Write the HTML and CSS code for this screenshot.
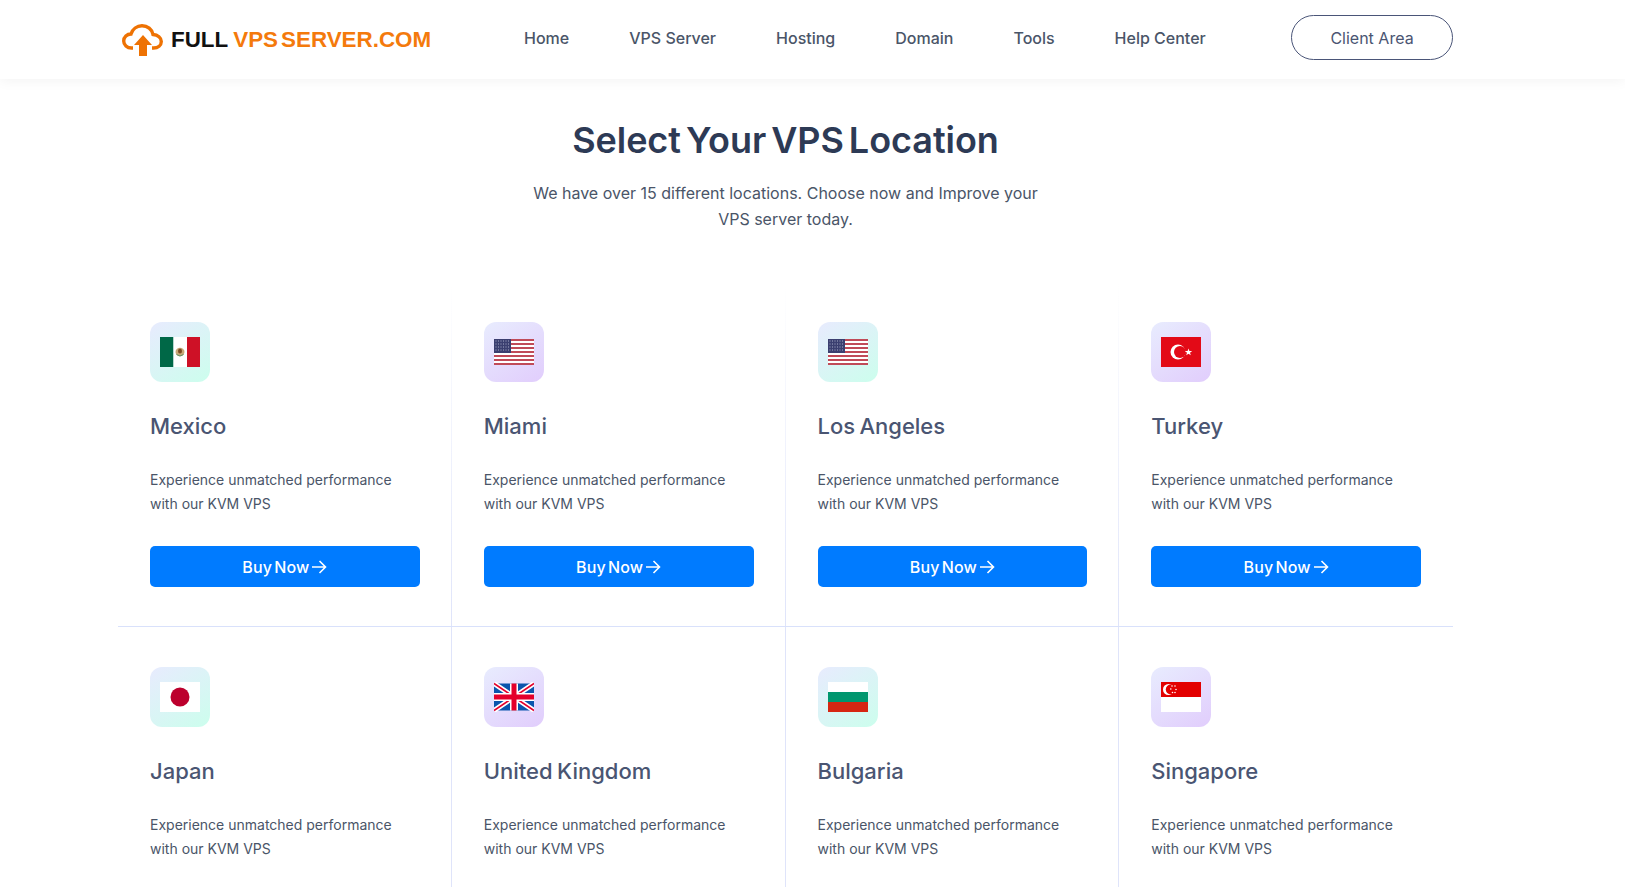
FILE: index.html
```html
<!DOCTYPE html>
<html lang="en">
<head>
    <meta charset="UTF-8">
    <meta name="viewport" content="width=device-width, initial-scale=1.0">
    <title>Select Your VPS Location</title>
    <link rel="stylesheet" href="styles.css">
</head>
<body>
    <svg class="sprite" aria-hidden="true">
        <symbol id="flag-us" viewBox="0 0 40 30">
            <rect y="2" width="40" height="26" fill="#fff"/>
            <path d="M0 3h40M0 7h40M0 11h40M0 15h40M0 19h40M0 23h40M0 27h40" stroke="#c04a58" stroke-width="2"/>
            <rect y="2" width="17" height="14" fill="#3b3f70"/>
            <path d="M1.5 4h14M1.5 7h14M1.5 10h14M1.5 13h14" stroke="#a9adc8" stroke-width="1" stroke-dasharray="1 1.5"/>
        </symbol>
        <symbol id="arrow" viewBox="0 0 16 16">
            <path d="M1 8h13.5M8.5 2l6 6-6 6" fill="none" stroke="currentColor" stroke-width="1.6"/>
        </symbol>
    </svg>

    <header class="site-header">
        <div class="container header-inner">
            <a class="logo" href="#">
                <svg class="logo-icon" viewBox="0 0 41 32" aria-hidden="true">
                    <path d="M11 24H9.500C5 24 1.700 20.800 1.700 17 1.700 13 5 10 9 10 10.500 5 15 1.800 20 1.800 25.500 1.800 30 5.300 31 10.500 35.800 10.800 39.300 13.800 39.300 17.500 39.300 21.300 36 24 31.500 24H30" fill="none" stroke="#ee7203" stroke-width="3.400"/>
                    <path d="M21 11L30 21H25V32H17V21H12Z" fill="#ee7203"/>
                </svg>
                <span class="logo-text">FULL</span>
                <span class="logo-text orange">VPS</span>
                <span class="logo-text orange">SERVER.COM</span>
            </a>
            <nav class="main-nav">
                <a href="#">Home</a>
                <a href="#">VPS Server</a>
                <a href="#">Hosting</a>
                <a href="#">Domain</a>
                <a href="#">Tools</a>
                <a href="#">Help Center</a>
            </nav>
            <a class="client-btn" href="#">Client Area</a>
        </div>
    </header>

    <main class="container">
        <div class="section-title">
            <h1>Select Your VPS Location</h1>
            <p>We have over 15 different locations. Choose now and Improve your VPS server today.</p>
        </div>

        <div class="location-grid">
            <div class="card top">
                <div class="flag-box mint">
                    <svg class="flag" viewBox="0 0 40 30">
                        <rect width="13.500" height="30" fill="#006847"/>
                        <rect x="13.500" width="13.500" height="30" fill="#fff"/>
                        <rect x="27" width="13" height="30" fill="#ce1126"/>
                        <ellipse cx="20" cy="15" rx="4.500" ry="4.200" fill="#c9a878"/>
                        <ellipse cx="20" cy="14" rx="2" ry="2.500" fill="#7a4a22"/>
                        <path d="M16.500 17.500Q20 20.500 23.500 17.500" fill="none" stroke="#5d8f62" stroke-width="1"/>
                    </svg>
                </div>
                <h3>Mexico</h3>
                <p>Experience unmatched performance with our KVM VPS</p>
                <a class="buy-btn" href="#">Buy Now<svg class="arrow"><use href="#arrow"/></svg></a>
            </div>
            <div class="card top">
                <div class="flag-box violet">
                    <svg class="flag"><use href="#flag-us"/></svg>
                </div>
                <h3>Miami</h3>
                <p>Experience unmatched performance with our KVM VPS</p>
                <a class="buy-btn" href="#">Buy Now<svg class="arrow"><use href="#arrow"/></svg></a>
            </div>
            <div class="card top">
                <div class="flag-box mint">
                    <svg class="flag"><use href="#flag-us"/></svg>
                </div>
                <h3>Los Angeles</h3>
                <p>Experience unmatched performance with our KVM VPS</p>
                <a class="buy-btn" href="#">Buy Now<svg class="arrow"><use href="#arrow"/></svg></a>
            </div>
            <div class="card top">
                <div class="flag-box violet">
                    <svg class="flag" viewBox="0 0 40 30">
                        <rect width="40" height="30" fill="#e30a17"/>
                        <circle cx="17" cy="15" r="7.500" fill="#fff"/>
                        <circle cx="19" cy="15" r="6" fill="#e30a17"/>
                        <path d="M27.500 11.500l.9 2.600 2.800-.1-2.200 1.700.8 2.600-2.300-1.500-2.300 1.500.8-2.600-2.200-1.700 2.800.1z" fill="#fff"/>
                    </svg>
                </div>
                <h3>Turkey</h3>
                <p>Experience unmatched performance with our KVM VPS</p>
                <a class="buy-btn" href="#">Buy Now<svg class="arrow"><use href="#arrow"/></svg></a>
            </div>

            <div class="card">
                <div class="flag-box mint">
                    <svg class="flag" viewBox="0 0 40 30">
                        <rect width="40" height="30" fill="#fff"/>
                        <circle cx="20" cy="15" r="9.500" fill="#bc002d"/>
                    </svg>
                </div>
                <h3>Japan</h3>
                <p>Experience unmatched performance with our KVM VPS</p>
            </div>
            <div class="card">
                <div class="flag-box violet">
                    <svg class="flag" viewBox="0 0 40 30">
                        <rect y="1.500" width="40" height="27" fill="#0b55ad"/>
                        <path d="M0 1.500L40 28.500M40 1.500L0 28.500" stroke="#fff" stroke-width="5"/>
                        <path d="M0 1.500L40 28.500M40 1.500L0 28.500" stroke="#e4002b" stroke-width="1.600"/>
                        <path d="M20 1.500V28.500M0 15H40" stroke="#fff" stroke-width="8"/>
                        <path d="M20 1.500V28.500M0 15H40" stroke="#e4002b" stroke-width="5"/>
                    </svg>
                </div>
                <h3>United Kingdom</h3>
                <p>Experience unmatched performance with our KVM VPS</p>
            </div>
            <div class="card">
                <div class="flag-box mint">
                    <svg class="flag" viewBox="0 0 40 30">
                        <rect width="40" height="10" fill="#fff"/>
                        <rect y="10" width="40" height="10" fill="#00966e"/>
                        <rect y="20" width="40" height="10" fill="#d62612"/>
                    </svg>
                </div>
                <h3>Bulgaria</h3>
                <p>Experience unmatched performance with our KVM VPS</p>
            </div>
            <div class="card">
                <div class="flag-box violet">
                    <svg class="flag" viewBox="0 0 40 30">
                        <rect width="40" height="15" fill="#e30000"/>
                        <rect y="15" width="40" height="15" fill="#fff"/>
                        <circle cx="7.500" cy="7.500" r="5.500" fill="#fff"/>
                        <circle cx="9.800" cy="7.500" r="5" fill="#e30000"/>
                        <path d="M11 4h.01M14 4h.01M9.800 7h.01M15 7.500h.01M11.500 10.500h.01M14 10.500h.01" stroke="#fff" stroke-width="1.600" stroke-linecap="round"/>
                    </svg>
                </div>
                <h3>Singapore</h3>
                <p>Experience unmatched performance with our KVM VPS</p>
            </div>
        </div>
    </main>
</body>
</html>
```

FILE: styles.css
```css
/* General */
html, body {
    height: 100%;
    overflow: hidden;
}

body {
    margin: 0;
    font-family: 'Inter', sans-serif;
    color: #4a5568;
    background: #fff;
}

a {
    text-decoration: none;
    color: inherit;
}

.sprite {
    display: none;
}

.container {
    width: 1335px;
    margin-left: 118px;
}

/* Header */
.site-header {
    height: 79px;
    background: #fff;
    box-shadow: 0 2px 12px rgba(0, 0, 0, 0.05);
}

.header-inner {
    box-sizing: border-box;
    height: 100%;
    padding-bottom: 5px;
    display: flex;
    align-items: center;
}

.logo {
    display: flex;
    align-items: center;
    flex: none;
    width: 313px;
    margin-top: 5px;
}

.logo-icon {
    flex: none;
    width: 41px;
    height: 32px;
    margin: 0 8px 0 4px;
}

.logo-text {
    flex: none;
    font-family: 'Liberation Sans', sans-serif;
    font-weight: 700;
    font-size: 22.400px;
    color: #111;
    margin-right: 5px;
}

.logo-text.orange {
    color: #f47a0c;
    margin-right: 3px;
}

.main-nav {
    display: flex;
    gap: 60px;
    margin-left: 93px;
    margin-top: 2px;
    font-size: 16px;
    font-weight: 500;
}

.client-btn {
    margin-left: auto;
    width: 162px;
    height: 45px;
    box-sizing: border-box;
    padding-top: 1px;
    display: flex;
    align-items: center;
    justify-content: center;
    border: 1px solid #4a5578;
    border-radius: 23px;
    font-size: 16px;
    color: #4a5572;
}

/* Section title */
.section-title {
    text-align: center;
    padding-top: 37px;
    margin-bottom: 50px;
}

.section-title h1 {
    margin: 0 0 16px;
    font-size: 36px;
    line-height: 48px;
    font-weight: 600;
    letter-spacing: -0.05px;
    word-spacing: -4px;
    color: #2d3a55;
}

.section-title p {
    width: 520px;
    margin: 0 auto;
    font-size: 16px;
    line-height: 26px;
}

/* Location cards */
.location-grid {
    display: grid;
    grid-template-columns: repeat(4, 1fr);
}

.card {
    padding: 40px 32px;
    background: linear-gradient(#dfe4fa, #dfe4fa) right top / 1px 100% no-repeat;
}

.card:nth-child(4n) {
    background: none;
}

.card.top {
    padding-bottom: 39px;
    border-bottom: 1px solid #d9e1fb;
    background: linear-gradient(rgba(223, 228, 250, 0), #dfe4fa) right top / 1px 100% no-repeat;
}

.card.top:nth-child(4n) {
    background: none;
}

.flag-box {
    width: 60px;
    height: 60px;
    border-radius: 12px;
    display: flex;
    align-items: center;
    justify-content: center;
}

.flag-box.mint {
    background: linear-gradient(145deg, #e8ebfe, #ccfeed);
}

.flag-box.violet {
    background: linear-gradient(145deg, #e8ecfe, #e1cdfc);
}

.flag {
    width: 40px;
    height: 30px;
}

.card h3 {
    margin: 29px 0 0;
    font-size: 22px;
    line-height: 30px;
    font-weight: 500;
    word-spacing: -1.500px;
    color: #4a5572;
}

.card p {
    margin: 27px 0 0;
    font-size: 14px;
    line-height: 24px;
}

.buy-btn {
    margin-top: 30px;
    height: 41px;
    display: flex;
    align-items: center;
    justify-content: center;
    gap: 2px;
    background: #007bff;
    border-radius: 5px;
    color: #fff;
    font-size: 16px;
    font-weight: 500;
    letter-spacing: 0.1px;
    word-spacing: -2px;
}

.arrow {
    width: 16px;
    height: 16px;
}
```
